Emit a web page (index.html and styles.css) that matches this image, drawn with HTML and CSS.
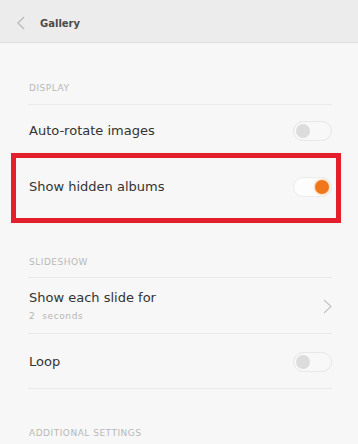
FILE: index.html
```html
<!DOCTYPE html>
<html>
<head>
<meta charset="utf-8">
<link rel="stylesheet" href="styles.css">
</head>
<body>
<header class="topbar">
  <svg class="back" width="10" height="14" viewBox="0 0 10 14"><polyline points="8,1 2,7 8,13" fill="none" stroke="#b9b9b9" stroke-width="1.3"/></svg>
  <span class="title">Gallery</span>
</header>
<main class="list">
  <div class="section-head">DISPLAY</div>
  <div class="row row-first">
    <span class="label">Auto-rotate images</span>
    <span class="toggle"><span class="knob"></span></span>
  </div>
  <div class="row highlight">
    <span class="label">Show hidden albums</span>
    <span class="toggle on"><span class="knob"></span></span>
  </div>
  <div class="section-head sh-slide">SLIDESHOW</div>
  <div class="row row-two divided">
    <div class="texts">
      <span class="label">Show each slide for</span>
      <span class="sub">2&nbsp; seconds</span>
    </div>
    <svg class="chev" width="9" height="15" viewBox="0 0 9 15"><polyline points="1,1 8,7.5 1,14" fill="none" stroke="#c4c4c4" stroke-width="1.2"/></svg>
  </div>
  <div class="row row-loop divided">
    <span class="label">Loop</span>
    <span class="toggle"><span class="knob"></span></span>
  </div>
  <div class="section-head sh-add">ADDITIONAL SETTINGS</div>
</main>
</body>
</html>
```
FILE: styles.css
```css
* { box-sizing: border-box; }
html, body { margin: 0; padding: 0; }
body {
  width: 358px;
  height: 444px;
  overflow: hidden;
  background: #f7f7f7;
  font-family: "DejaVu Sans", "Liberation Sans", sans-serif;
  color: #333;
}
.topbar {
  height: 43px;
  background: #ececec;
  border-bottom: 1px solid #dedede;
  display: flex;
  align-items: center;
  padding-left: 16px;
  padding-top: 3px;
}
.back { display: block; margin-top: 1px; }
.title {
  margin-left: 14px;
  font-size: 10px;
  font-weight: bold;
  color: #4a4a4a;
  margin-top: 1px;
}
.list {
  padding: 0 26px 0 28px;
}
.section-head {
  height: 62px;
  display: flex;
  align-items: flex-end;
  padding-bottom: 10px;
  padding-left: 1px;
  line-height: 12px;
  font-size: 9px;
  letter-spacing: 0.5px;
  color: #b8b8b8;
  border-bottom: 1px solid #ebebeb;
}
.sh-slide { height: 55px; padding-bottom: 9px; }
.sh-add { border-bottom: none; padding-bottom: 12px; }
.row {
  display: flex;
  align-items: center;
  justify-content: space-between;
  padding-left: 1px;
}
.row-first { height: 48px; padding-top: 4px; }
.highlight {
  height: 70px;
  margin-left: -17px;
  margin-right: -9px;
  border: 5px solid #e41e2b;
  padding-left: 13px;
  padding-right: 4px;
  padding-bottom: 2px;
}
.divided { border-bottom: 1px solid #ebebeb; }
.row-two {
  height: 56px;
  align-items: flex-start;
  padding-top: 11px;
}
.row-loop { height: 55px; padding-top: 2px; }
.texts { display: flex; flex-direction: column; }
.label {
  font-size: 13px;
  line-height: 18px;
  color: #333;
}
.sub {
  font-size: 9px;
  line-height: 18px;
  letter-spacing: 0.6px;
  color: #b5b5b5;
}
.chev { margin-top: 10px; margin-right: 0; }
.toggle {
  width: 39px;
  height: 20px;
  border-radius: 10px;
  background: #f8f8f8;
  border: 1px solid #e8e8e8;
  box-shadow: inset 0 0 1px rgba(0,0,0,0.05);
  display: flex;
  align-items: center;
  padding: 0 2px;
}
.knob {
  width: 14px;
  height: 14px;
  border-radius: 50%;
  background: #dcdcdc;
}
.toggle.on {
  justify-content: flex-end;
  background: #fdfdfd;
  border-color: #ececec;
}
.toggle.on .knob {
  background: #f0781a;
  box-shadow: 0 0 2px 1px rgba(240,140,60,0.35);
}
```
